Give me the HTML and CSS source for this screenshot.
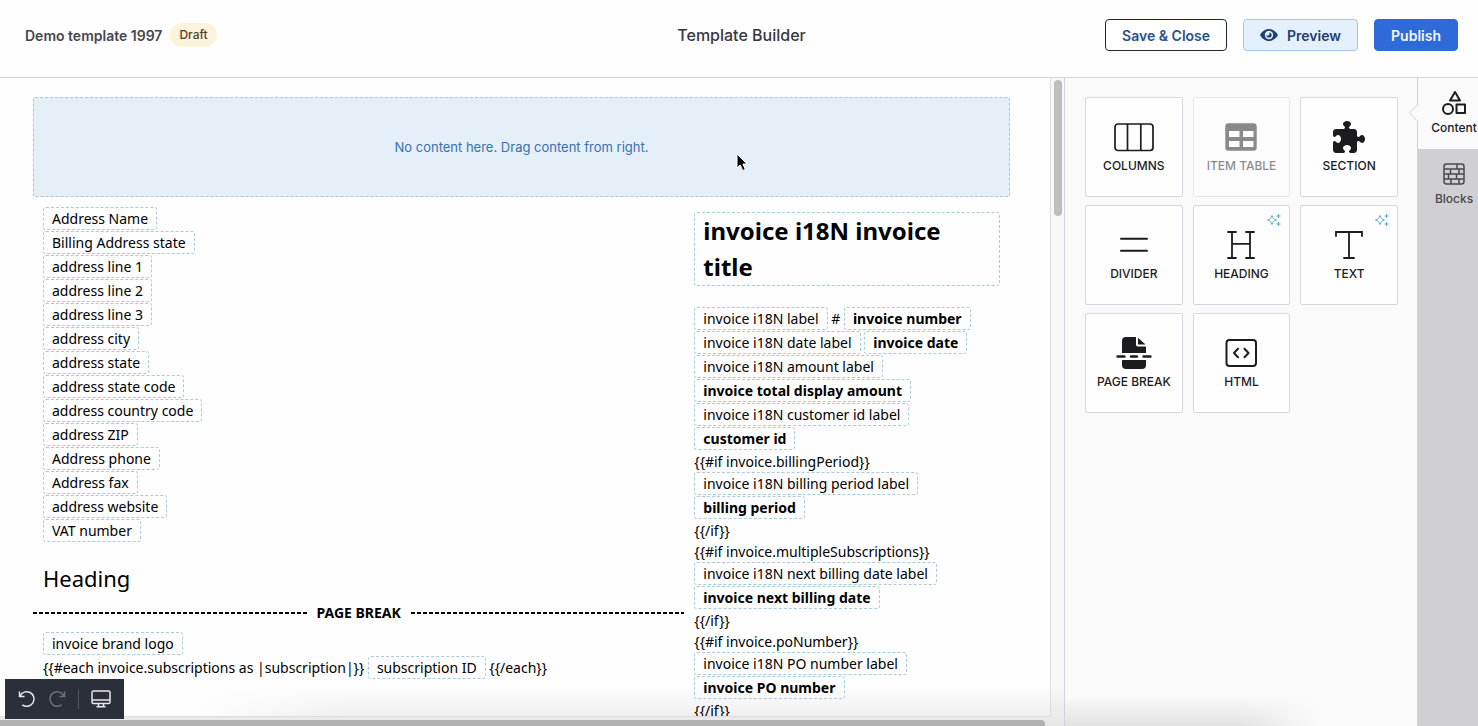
FILE: index.html
```html
<!DOCTYPE html>
<html lang="en">
<head>
  <meta charset="utf-8">
  <title>Template Builder</title>
  <link rel="stylesheet" href="styles.css">
</head>
<body>
  <header class="topbar">
    <div class="topbar-left">
      <span class="template-name">Demo template 1997</span>
      <span class="badge">Draft</span>
    </div>
    <h1 class="topbar-title">Template Builder</h1>
    <div class="topbar-actions">
      <button class="btn btn-outline">Save &amp; Close</button>
      <button class="btn btn-light">
        <svg width="18" height="12" viewBox="0 0 18 12"><path fill="#1d3f72" fill-rule="evenodd" d="M0 6C2 2.400 5.200 0 9 0s7 2.400 9 6c-2 3.600-5.200 6-9 6S2 9.600 0 6zm9-4.200a4.200 4.200 0 1 0 0 8.400 4.200 4.200 0 0 0 0-8.400z"/><path fill="#1d3f72" d="M9 3.400A2.600 2.600 0 1 1 6.400 6 1.400 1.400 0 0 0 9 3.400z"/></svg>
        Preview
      </button>
      <button class="btn btn-primary">Publish</button>
    </div>
  </header>

  <main class="builder">
    <section class="canvas">
      <div class="page">
        <div class="dropzone">
          No content here. Drag content from right.
          <svg class="cursor" width="14" height="20" viewBox="0 0 14 20"><path d="M1 1v14l3.200-3 2.500 5.600 2.600-1.200L6.900 11H11z" fill="#000" stroke="#fff" stroke-width="1"/></svg>
        </div>
        <div class="columns">
          <div class="col col-main">
            <div class="text-block">
              <div><span class="chip">Address Name</span></div>
              <div><span class="chip">Billing Address state</span></div>
              <div><span class="chip">address line 1</span></div>
              <div><span class="chip">address line 2</span></div>
              <div><span class="chip">address line 3</span></div>
              <div><span class="chip">address city</span></div>
              <div><span class="chip">address state</span></div>
              <div><span class="chip">address state code</span></div>
              <div><span class="chip">address country code</span></div>
              <div><span class="chip">address ZIP</span></div>
              <div><span class="chip">Address phone</span></div>
              <div><span class="chip">Address fax</span></div>
              <div><span class="chip">address website</span></div>
              <div><span class="chip">VAT number</span></div>
            </div>
            <h2 class="heading">Heading</h2>
            <div class="page-break">PAGE BREAK</div>
            <div class="text-block">
              <div><span class="chip">invoice brand logo</span></div>
              <div>{{#each invoice.subscriptions as |subscription|}} <span class="chip">subscription ID</span> {{/each}}</div>
            </div>
          </div>
          <div class="col col-side">
            <h2 class="invoice-title">invoice i18N invoice title</h2>
            <div class="text-block">
              <div><span class="chip">invoice i18N label</span> # <b class="chip">invoice number</b></div>
              <div><span class="chip">invoice i18N date label</span> <b class="chip">invoice date</b></div>
              <div><span class="chip">invoice i18N amount label</span></div>
              <div><b class="chip">invoice total display amount</b></div>
              <div><span class="chip">invoice i18N customer id label</span></div>
              <div><b class="chip">customer id</b></div>
              <div>{{#if invoice.billingPeriod}}</div>
              <div><span class="chip">invoice i18N billing period label</span></div>
              <div><b class="chip">billing period</b></div>
              <div>{{/if}}</div>
              <div>{{#if invoice.multipleSubscriptions}}</div>
              <div><span class="chip">invoice i18N next billing date label</span></div>
              <div><b class="chip">invoice next billing date</b></div>
              <div>{{/if}}</div>
              <div>{{#if invoice.poNumber}}</div>
              <div><span class="chip">invoice i18N PO number label</span></div>
              <div><b class="chip">invoice PO number</b></div>
              <div>{{/if}}</div>
            </div>
          </div>
        </div>
      </div>
      <div class="scroll-y"><div class="thumb-y"></div></div>
      <div class="scroll-x"><div class="thumb-x"></div></div>

      <div class="toolbar">
        <button class="tool" aria-label="Undo">
          <svg width="18" height="18" viewBox="0 0 18 18"><path d="M1.500 1.500v5h5M2 6.200A7.300 7.300 0 1 1 4.300 14.800"/></svg>
        </button>
        <button class="tool tool-off" aria-label="Redo">
          <svg width="18" height="18" viewBox="0 0 18 18"><path d="M16.500 1.500v5h-5M16 6.200A7.300 7.300 0 1 0 13.700 14.800"/></svg>
        </button>
        <span class="tool-sep"></span>
        <button class="tool" aria-label="Desktop view">
          <svg width="20" height="18" viewBox="0 0 20 18"><rect x="1" y="1" width="18" height="12.500" rx="1.500"/><path d="M1 10h18M7.500 13.500v3M12.500 13.500v3M5.500 16.800h9"/></svg>
        </button>
      </div>
    </section>

    <aside class="panel">
      <button class="card">
        <svg width="40" height="32" viewBox="0 0 40 32"><g fill="none" stroke="#1c1c1e" stroke-width="1.700"><rect x="1" y="3" width="38" height="26.500" rx="3"/><path d="M13.500 3v26.500M26.800 3v26.500"/></g></svg>
        COLUMNS
      </button>
      <button class="card" disabled>
        <svg width="32" height="32" viewBox="0 0 32 32"><path fill="#1c1c1e" fill-rule="evenodd" d="M3.500 2.300h25a3.200 3.200 0 0 1 3.200 3.200v21a3.200 3.200 0 0 1-3.200 3.200h-25a3.200 3.200 0 0 1-3.200-3.200v-21a3.200 3.200 0 0 1 3.200-3.200zM4 10v6h10.500v-6zM18 10v6h10.500v-6zM4 20v6h10.500v-6zM18 20v6h10.500v-6z"/></svg>
        ITEM TABLE
      </button>
      <button class="card">
        <svg width="32" height="32" viewBox="0 0 512 512"><path fill="#1c1c1e" d="M192 104.800c0-9.200-5.800-17.300-13.200-22.800C167.200 73.300 160 61.300 160 48c0-26.500 28.700-48 64-48s64 21.500 64 48c0 13.300-7.200 25.300-18.800 34c-7.400 5.500-13.200 13.600-13.200 22.800c0 12.800 10.400 23.200 23.200 23.200H336c26.500 0 48 21.500 48 48v56.800c0 12.800 10.400 23.200 23.200 23.200c9.200 0 17.300-5.800 22.800-13.200c8.700-11.600 20.700-18.800 34-18.800c26.500 0 48 28.700 48 64s-21.500 64-48 64c-13.300 0-25.300-7.200-34-18.800c-5.500-7.400-13.600-13.200-22.800-13.200c-12.800 0-23.200 10.400-23.200 23.200V464c0 26.500-21.500 48-48 48H279.200c-12.800 0-23.200-10.400-23.200-23.200c0-9.200 5.800-17.300 13.200-22.800c11.600-8.700 18.800-20.700 18.800-34c0-26.500-28.700-48-64-48s-64 21.500-64 48c0 13.300 7.200 25.300 18.800 34c7.400 5.500 13.200 13.600 13.200 22.800c0 12.800-10.400 23.200-23.200 23.200H48c-26.500 0-48-21.500-48-48V343.200C0 330.400 10.400 320 23.200 320c9.200 0 17.300 5.800 22.800 13.200C54.700 344.800 66.700 352 80 352c26.500 0 48-28.700 48-64s-21.500-64-48-64c-13.300 0-25.300 7.200-34 18.800C40.500 250.200 32.400 256 23.200 256C10.400 256 0 245.600 0 232.800V176c0-26.500 21.500-48 48-48H168.800c12.800 0 23.200-10.400 23.200-23.200z"/></svg>
        SECTION
      </button>
      <button class="card">
        <svg width="32" height="32" viewBox="0 0 32 32"><path d="M3 9.700h26M3 21.700h26" stroke="#1c1c1e" stroke-width="2" stroke-linecap="round"/></svg>
        DIVIDER
      </button>
      <button class="card">
        <svg class="sparkle" width="14" height="14" viewBox="0 0 14 14"><path d="M5 2.500c.6 2.600 1.900 3.900 4.500 4.500C6.900 7.600 5.600 8.900 5 11.500 4.400 8.900 3.100 7.600.5 7 3.100 6.400 4.400 5.100 5 2.500zM11.500 1v4M9.500 3h4M11.500 9v4M9.500 11h4"/></svg>
        <svg width="32" height="32" viewBox="0 0 32 32"><path d="M3 3h8M21 3h8M3 29h8M21 29h8M7 3v26M25 3v26M7 14.800h18" fill="none" stroke="#1c1c1e" stroke-width="1.800" stroke-linecap="round"/></svg>
        HEADING
      </button>
      <button class="card">
        <svg class="sparkle" width="14" height="14" viewBox="0 0 14 14"><path d="M5 2.500c.6 2.600 1.900 3.900 4.500 4.500C6.900 7.600 5.600 8.900 5 11.500 4.400 8.900 3.100 7.600.5 7 3.100 6.400 4.400 5.100 5 2.500zM11.500 1v4M9.500 3h4M11.500 9v4M9.500 11h4"/></svg>
        <svg width="32" height="32" viewBox="0 0 32 32"><path d="M3 7V3h26v4M16 3v26M11 29h10" fill="none" stroke="#1c1c1e" stroke-width="1.800" stroke-linecap="round"/></svg>
        TEXT
      </button>
      <button class="card">
        <svg width="36" height="32" viewBox="0 0 36 32"><g fill="#1c1c1e"><path d="M6 16V4a4 4 0 0 1 4-4h10v7.500a2 2 0 0 0 2 2h8V16zM22 .8V7.500h7.500zM6 23h24v5a4 4 0 0 1-4 4H10a4 4 0 0 1-4-4z"/></g><path d="M1.500 19.500h7M15 19.500h6M27.500 19.500h7" stroke="#1c1c1e" stroke-width="2.400" stroke-linecap="round"/></svg>
        PAGE BREAK
      </button>
      <button class="card">
        <svg width="32" height="32" viewBox="0 0 32 32"><g fill="none" stroke="#1c1c1e" stroke-width="2" stroke-linecap="round" stroke-linejoin="round"><rect x="1.500" y="3" width="29.500" height="26" rx="3"/><path d="M13 11.800 9 16l4 4.200M19.500 11.800l4 4.200-4 4.200"/></g></svg>
        HTML
      </button>
    </aside>

    <nav class="tabs">
      <button class="tab tab-active">
        <svg class="tab-arrow" width="11" height="20" viewBox="0 0 11 20"><path d="M11 0v20L1.500 10z" fill="#fafafb"/><path d="M10.500 1 1.500 10l9 9" fill="none" stroke="#d0d2d8"/></svg>
        <svg width="24" height="24" viewBox="0 0 24 24"><g fill="none" stroke="#1c1c1e" stroke-width="2" stroke-linejoin="round"><path d="M13 1 8 9.500h10z"/><circle cx="6" cy="18" r="5"/><rect x="14.500" y="13.500" width="8.500" height="8.500"/></g></svg>
        Content
      </button>
      <button class="tab">
        <svg width="24" height="24" viewBox="0 0 24 24"><g fill="none" stroke="#48494c" stroke-width="1.500"><rect x="2" y="2" width="20" height="20" rx="2.500"/><path d="M2 7h20M2 12h20M2 17h20M15 2v5M8.500 7v5M17 7v5M6.500 12v5M14.500 12v5M9 17v5M17 17v5"/></g></svg>
        Blocks
      </button>
    </nav>
  </main>
</body>
</html>
```

FILE: styles.css
```css
* {
  box-sizing: border-box;
}
body {
  margin: 0;
  height: 100vh;
  display: flex;
  flex-direction: column;
  overflow: hidden;
  font-family: Inter, "Liberation Sans", sans-serif;
  background: #fefefe;
  color: #1c1c1e;
}
button {
  font-family: inherit;
  margin: 0;
  cursor: pointer;
}

/* top bar */
.topbar {
  display: grid;
  grid-template-columns: 1fr auto 1fr;
  align-items: center;
  padding: 19px 20px 26px 25px;
  border-bottom: 1px solid #d3d4d6;
}
.topbar-left {
  display: flex;
  align-items: center;
  gap: 8px;
}
.template-name {
  font-size: 14px;
  font-weight: 600;
  color: #46474c;
}
.badge {
  padding: 0 9px;
  border-radius: 12px;
  background: #fbf3dc;
  color: #4f4327;
  font-size: 12px;
  font-weight: 500;
  line-height: 24px;
}
.topbar-title {
  margin: 0;
  font-size: 16px;
  font-weight: 500;
  line-height: 20px;
  color: #36373c;
}
.topbar-actions {
  display: flex;
  justify-content: flex-end;
  gap: 16px;
}
.btn {
  display: flex;
  align-items: center;
  gap: 9px;
  height: 32px;
  padding: 0 16px;
  border: 1px solid;
  border-radius: 4px;
  font-size: 14px;
  font-weight: 600;
}
.btn-outline {
  background: #fff;
  border-color: #24263c;
  color: #27508f;
}
.btn-light {
  background: #e4f0fb;
  border-color: #a5c4e8;
  color: #1d3f72;
}
.btn-primary {
  background: #2f6bd8;
  border-color: #2f6bd8;
  color: #f2f7ff;
}

.builder {
  flex: 1;
  min-height: 0;
  display: flex;
}

/* canvas */
.canvas {
  position: relative;
  flex: 1;
  min-width: 0;
  display: grid;
  grid-template-columns: 1fr 13px;
  grid-template-rows: minmax(0, 1fr) 9px;
  background: linear-gradient(to top, #e6e6e6, #f8f8f9 40px);
}
.page {
  overflow: hidden;
  padding: 19px 40px 0 33px;
  border-right: 1px solid #dcdde0;
  border-bottom: 1px solid #dcdde0;
  background: linear-gradient(to right, #fefefe 18%, transparent 34%), linear-gradient(to top, #efefef, #fefefe 30px);
  font-family: "Noto Sans", sans-serif;
  font-size: 14px;
  line-height: 21px;
  color: #000;
}
.dropzone {
  position: relative;
  display: flex;
  align-items: center;
  justify-content: center;
  height: 100px;
  border: 1px dashed #a9c9dd;
  border-radius: 2px;
  background: #e5eff8;
  color: #3a6fb5;
  font-family: Inter, "Liberation Sans", sans-serif;
  font-size: 13px;
}
.cursor {
  position: absolute;
  left: 72%;
  top: 55px;
}
.columns {
  display: grid;
  grid-template-columns: 2fr 1fr;
}
.col {
  min-width: 0;
  padding: 10px;
}
.col-main {
  padding: 10px 0;
}
.col-main .text-block,
.heading {
  padding: 0 10px;
}
.chip {
  display: inline-block;
  margin-bottom: 1px;
  padding: 0 8px;
  border: 1px dashed #a9cbdc;
  border-radius: 3px;
  vertical-align: top;
}
/* rows that hold a chip centre their plain text on it */
.text-block div:has(.chip) {
  line-height: 23px;
}
.text-block .chip {
  line-height: 21px;
}
.heading {
  margin: 19px 0 8px;
  font-size: 22px;
  font-weight: 400;
  line-height: 32px;
}
.page-break {
  display: flex;
  align-items: center;
  gap: 10px;
  margin-bottom: 9px;
  font-weight: 700;
}
.page-break::before,
.page-break::after {
  content: "";
  flex: 1;
  height: 2px;
  background: repeating-linear-gradient(to right, #000 0 4px, transparent 4px 6px);
}
.invoice-title {
  margin: 5px 0 21px;
  padding: 0 8px;
  border: 1px dashed #a9cbdc;
  border-radius: 3px;
  font-size: 24px;
  font-weight: 700;
  line-height: 36px;
}
.scroll-y {
  padding: 2px 2px 0 3px;
}
.thumb-y {
  height: 136px;
  border-radius: 4px;
  background: #bdbebe;
}
.scroll-x {
  grid-column: 1 / 3;
  padding: 3px 19px 0 0;
}
.thumb-x {
  height: 6px;
  border-radius: 0 4px 0 0;
  background: #b1b1b1;
}

/* floating toolbar */
.toolbar {
  position: absolute;
  left: 5px;
  bottom: 7px;
  display: flex;
  align-items: center;
  gap: 12px;
  height: 40px;
  padding: 0 13px;
  background: #2a2f3a;
}
.tool {
  display: flex;
  padding: 0;
  border: 0;
  background: none;
}
.tool svg {
  fill: none;
  stroke: #e6e8ea;
  stroke-width: 1.5px;
}
.tool-off svg {
  stroke: #6e7278;
}
.tool-sep {
  width: 1px;
  height: 20px;
  background: #50555e;
}

/* content panel */
.panel {
  width: 353px;
  display: grid;
  grid-template-columns: repeat(3, 1fr);
  grid-auto-rows: 100px;
  align-content: start;
  gap: 8px 10px;
  padding: 19px 19px 19px 20px;
  border-left: 1px solid #d0d2d8;
  background: linear-gradient(to left, #fafafb 28%, transparent 50%), linear-gradient(to top, #e2e2e2, #fafafb 30px);
}
.card {
  position: relative;
  display: flex;
  flex-direction: column;
  align-items: center;
  gap: 4px;
  padding: 23px 0 0;
  border: 1px solid #d6d8de;
  border-radius: 2px;
  background: #fefefe;
  color: #1c1c1e;
  font-size: 12px;
  font-weight: 500;
  line-height: 18px;
}
.card:disabled {
  opacity: 0.5;
}
.sparkle {
  position: absolute;
  top: 7px;
  right: 8px;
  fill: none;
  stroke: #5fa9cc;
}

/* side tabs */
.tabs {
  width: 61px;
  border-left: 1px solid #d0d2d8;
  background: #d0d0d2;
}
.tab {
  position: relative;
  display: flex;
  flex-direction: column;
  align-items: center;
  gap: 4px;
  width: 72px;
  padding: 13px 0 12px;
  border: 0;
  background: none;
  color: #48494c;
  font-size: 12px;
  font-weight: 500;
  line-height: 18px;
}
.tab-active {
  background: #fafafb;
  color: #1c1c1e;
}
.tab-arrow {
  position: absolute;
  top: 25px;
  left: -10px;
}
```
